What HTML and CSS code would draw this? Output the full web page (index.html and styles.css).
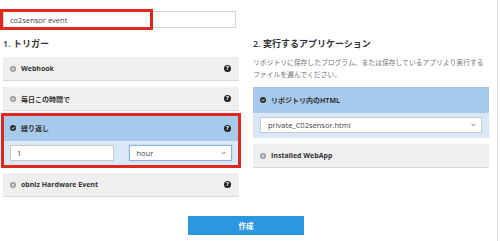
FILE: index.html
```html
<!DOCTYPE html>
<html lang="ja">
<head>
  <meta charset="UTF-8" />
  <title>Create Event</title>
  <link rel="stylesheet" href="styles.css">
</head>
<body>

  <div class="page">
    <div class="name-field">
      <input class="name-input" type="text" value="co2sensor event" />
      <span class="mark mark-name"></span>
    </div>

    <div class="columns">
      <!-- Trigger -->
      <section class="col">
        <h2>1. トリガー</h2>
        <div class="options">
          <div class="option">
            <svg class="radio" viewBox="0 0 8 8"><circle cx="4" cy="4" r="4" fill="#9a9a9a"/><circle cx="4" cy="4" r="2" fill="#d6d6d6"/></svg>
            <span class="label">Webhook</span>
            <span class="help">?</span>
          </div>
          <div class="option">
            <svg class="radio" viewBox="0 0 8 8"><circle cx="4" cy="4" r="4" fill="#9a9a9a"/><circle cx="4" cy="4" r="2" fill="#d6d6d6"/></svg>
            <span class="label">毎日この時間で</span>
            <span class="help">?</span>
          </div>
          <div class="option-card marked">
            <div class="option active">
              <svg class="radio" viewBox="0 0 8 8"><circle cx="4" cy="4" r="4" fill="#2b2b2b"/><path d="M2.2 4.1 L3.5 5.3 L5.9 2.8" fill="none" stroke="#fff" stroke-width="1.2"/></svg>
              <span class="label">繰り返し</span>
              <span class="help">?</span>
            </div>
            <div class="card-body repeat">
              <input class="field" type="text" value="1" />
              <div class="field select focused">
                <span>hour</span>
                <svg class="chevron" viewBox="0 0 8 5"><path d="M1 1 L4 4 L7 1" fill="none" stroke="#555" stroke-width="1.2"/></svg>
              </div>
            </div>
          </div>
          <div class="option">
            <svg class="radio" viewBox="0 0 8 8"><circle cx="4" cy="4" r="4" fill="#9a9a9a"/><circle cx="4" cy="4" r="2" fill="#d6d6d6"/></svg>
            <span class="label">obniz Hardware Event</span>
            <span class="help">?</span>
          </div>
        </div>
      </section>

      <!-- Application -->
      <section class="col">
        <h2>2. 実行するアプリケーション</h2>
        <p class="desc">リポジトリに保存したプログラム、または保存しているアプリより実行するファイルを選んでください。</p>
        <div class="options">
          <div class="option-card">
            <div class="option active">
              <svg class="radio" viewBox="0 0 8 8"><circle cx="4" cy="4" r="4" fill="#2b2b2b"/><path d="M2.2 4.1 L3.5 5.3 L5.9 2.8" fill="none" stroke="#fff" stroke-width="1.2"/></svg>
              <span class="label">リポジトリ内のHTML</span>
            </div>
            <div class="card-body">
              <div class="field select">
                <span>private_C02sensor.html</span>
                <svg class="chevron" viewBox="0 0 8 5"><path d="M1 1 L4 4 L7 1" fill="none" stroke="#555" stroke-width="1.2"/></svg>
              </div>
            </div>
          </div>
          <div class="option">
            <svg class="radio" viewBox="0 0 8 8"><circle cx="4" cy="4" r="4" fill="#9a9a9a"/><circle cx="4" cy="4" r="2" fill="#d6d6d6"/></svg>
            <span class="label">Installed WebApp</span>
          </div>
        </div>
      </section>
    </div>

    <div class="actions">
      <button class="btn-create">作成</button>
    </div>
  </div>

</body>
</html>
```

FILE: styles.css
```css
/* Reset */
* {
  margin: 0;
  padding: 0;
  box-sizing: border-box;
}

body {
  background: #fff;
  font-family: "Open Sans", "Noto Sans CJK JP", sans-serif;
  color: #333;
}

/* Page frame */
.page {
  width: 498px;
  height: 241px;
  padding: 11px 8px 0 3px;
  border-right: 1px solid #e4e4e4;
}

/* Event name */
.name-field {
  position: relative;
  width: 233px;
}
.name-input {
  display: block;
  width: 100%;
  height: 17px;
  border: 1px solid #d6d6d6;
  padding: 0 6px;
  font-family: inherit;
  font-size: 7.5px;
  color: #444;
  background: #fff;
}

/* Red annotation box */
.mark {
  position: absolute;
  border: 3px solid #e1271d;
  pointer-events: none;
}
.mark-name {
  left: -3px;
  top: -2px;
  width: 153px;
  height: 21px;
}

/* Two columns */
.columns {
  display: grid;
  grid-template-columns: 236px 236px;
  gap: 14px;
  margin-top: 10px;
}

h2 {
  font-size: 9px;
  font-weight: 600;
  line-height: 12px;
  margin-bottom: 7px;
  color: #333;
}

.desc {
  font-size: 6.8px;
  line-height: 12px;
  color: #777;
  margin-bottom: 6px;
}

.options {
  display: flex;
  flex-direction: column;
  gap: 6px;
}

/* Option rows */
.option {
  display: flex;
  align-items: center;
  height: 24px;
  padding: 0 8px 0 7px;
  background: #efefef;
  border-bottom: 1px solid #d9d9d9;
}
.option.active {
  height: 26px;
  background: #a6c9ec;
  border-bottom: none;
}
.radio {
  width: 6px;
  height: 6px;
  flex-shrink: 0;
}
.label {
  margin-left: 5px;
  font-size: 7px;
  font-weight: 700;
  color: #333;
}
.help {
  margin-left: auto;
  width: 7px;
  height: 7px;
  border-radius: 50%;
  background: #222;
  color: #fff;
  font-size: 6px;
  font-weight: 700;
  line-height: 7px;
  text-align: center;
}

/* Expanded option */
.option-card {
  background: #d9e8f6;
}
.option-card.marked {
  margin: -2px 0 1px;
  outline: 3px solid #e1271d;
  outline-offset: -1px;
}
.card-body {
  display: flex;
  gap: 15px;
  padding: 4px 7px 5px;
}
.repeat .field {
  flex: 1;
}
.field {
  height: 16px;
  border: 1px solid #c9c9c9;
  background: #fff;
  padding: 0 6px;
  font-family: inherit;
  font-size: 7.5px;
  color: #444;
  width: 100%;
}
.select {
  display: flex;
  align-items: center;
  justify-content: space-between;
  padding: 0 5px 0 7px;
}
.select.focused {
  border-color: #8db2de;
  box-shadow: 0 0 1px #8db2de;
}
.chevron {
  width: 5px;
  height: 4px;
}

/* Submit */
.actions {
  display: flex;
  justify-content: center;
  width: 486px;
  margin-top: 19px;
}
.btn-create {
  width: 116px;
  height: 19px;
  border: none;
  background: #2b97de;
  color: #fff;
  font-family: inherit;
  font-size: 7.5px;
  font-weight: 700;
}
```
